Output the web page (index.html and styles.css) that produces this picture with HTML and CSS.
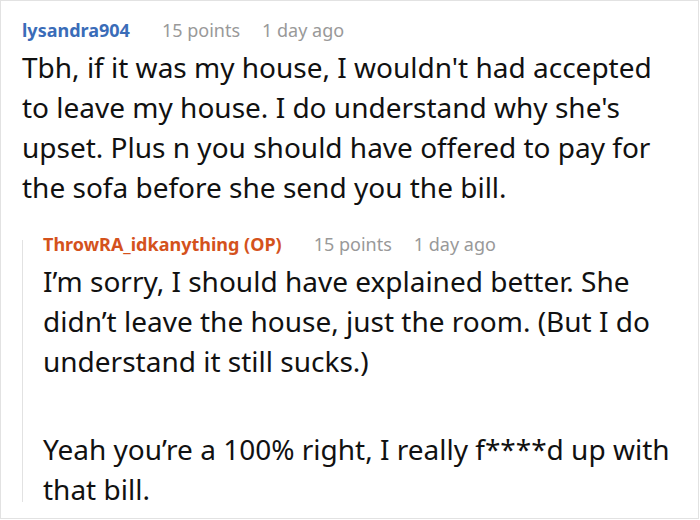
FILE: index.html
```html
<!DOCTYPE html>
<html>
<head>
<meta charset="utf-8">
<link rel="stylesheet" href="styles.css">
</head>
<body>
<div class="frame">
  <div class="comment">
    <div class="meta">
      <span class="user user-blue">lysandra904</span>
      <span class="info">15 points</span>
      <span class="info">1 day ago</span>
    </div>
    <div class="text">
      <p>Tbh, if it was my house, I wouldn't had accepted to leave my house. I do understand why she's upset. Plus n you should have offered to pay for the sofa before she send you the bill.</p>
    </div>
    <div class="reply">
      <div class="thread-line"></div>
      <div class="reply-body">
        <div class="meta">
          <span class="user user-op">ThrowRA_idkanything (OP)</span>
          <span class="info">15 points</span>
          <span class="info">1 day ago</span>
        </div>
        <div class="text">
          <p>I’m sorry, I should have explained better. She didn’t leave the house, just the room. (But I do understand it still sucks.)</p>
          <p>Yeah you’re a 100% right, I really f****d up with that bill.</p>
        </div>
      </div>
    </div>
  </div>
</div>
</body>
</html>
```
FILE: styles.css
```css
html, body {
  margin: 0;
  padding: 0;
  background: #fff;
}
.frame {
  width: 699px;
  height: 519px;
  box-sizing: border-box;
  border: 1px solid #e2e2e2;
  overflow: hidden;
  font-family: "Noto Sans", sans-serif;
  color: #111;
}
.comment {
  padding: 17px 26px 0 21px;
}
.meta {
  display: flex;
  gap: 22px;
  font-size: 18px;
  line-height: 24px;
  white-space: nowrap;
}
.user {
  font-weight: bold;
  margin-right: 10px;
}
.user-blue { color: #3a6cb8; }
.user-op { color: #d4521c; }
.info { color: #999; }
.text {
  font-size: 28px;
  line-height: 40px;
  margin-top: 5px;
}
.text p {
  margin: 0;
}
.text p + p {
  margin-top: 48px;
}
.reply {
  display: flex;
  margin-top: 25px;
}
.thread-line {
  width: 1px;
  background: #e2e2e2;
  margin: 8px 0 7px;
  flex: none;
}
.reply-body {
  margin-left: 20px;
  flex: 1;
}
```
